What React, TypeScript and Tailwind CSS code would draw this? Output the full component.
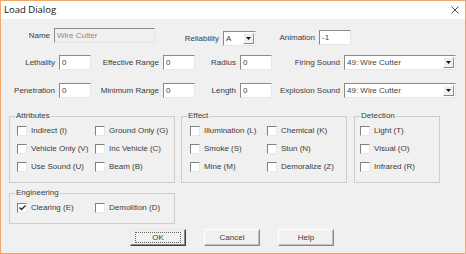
import { ReactNode } from "react";

const font = { fontFamily: '"Liberation Sans", Arial, sans-serif' };

function Label({ w, children }: { w: string; children: ReactNode }) {
  return <div className={`${w} shrink-0 pr-[4px] text-right`}>{children}</div>;
}

function TextBox({ w, value, disabled }: { w: string; value: string; disabled?: boolean }) {
  return (
    <div
      className={
        `${w} h-[15px] shrink-0 flex items-center pl-[2px] border border-t-[#8a8a8a] border-l-[#8a8a8a] border-r-[#e6e6e6] border-b-[#e6e6e6] ` +
        (disabled ? "bg-[#f0f0f0] text-[#8a8a8a]" : "bg-white text-[#444]")
      }
    >
      {value}
    </div>
  );
}

function Combo({ w, value }: { w: string; value: string }) {
  return (
    <div
      className={`${w} h-[15px] shrink-0 flex items-center bg-white border border-t-[#8a8a8a] border-l-[#8a8a8a] border-r-[#e6e6e6] border-b-[#e6e6e6]`}
    >
      <div className="flex-1 pl-[2px] text-[#444] truncate">{value}</div>
      <div className="w-[11px] h-[11px] mr-[1px] flex items-center justify-center bg-[#f0f0f0] border border-t-white border-l-white border-r-[#8a8a8a] border-b-[#8a8a8a]">
        <svg width="5" height="3" viewBox="0 0 5 3">
          <path d="M0 0h5L2.5 3z" fill="#111" />
        </svg>
      </div>
    </div>
  );
}

function Check({ label, checked }: { label: string; checked?: boolean }) {
  return (
    <div className="h-[18px] flex items-center gap-[4px]">
      <div className="w-[10px] h-[10px] shrink-0 bg-white border border-t-[#808080] border-l-[#808080] border-r-[#e8e8e8] border-b-[#e8e8e8] flex items-center justify-center">
        {checked && (
          <svg width="7" height="6" viewBox="0 0 7 6">
            <path d="M0.5 2.5L2.5 4.5L6.5 0.5" stroke="#222" strokeWidth="1.3" fill="none" />
          </svg>
        )}
      </div>
      <span className="whitespace-nowrap">{label}</span>
    </div>
  );
}

function Group({ title, w, h, children }: { title: string; w: string; h: string; children: ReactNode }) {
  return (
    <fieldset className={`${w} ${h} shrink-0 border border-[#cdcdcd]`}>
      <legend className="ml-[5px] px-[1px] leading-[10px]">{title}</legend>
      {children}
    </fieldset>
  );
}

function Button({ label, isDefault }: { label: string; isDefault?: boolean }) {
  return (
    <div
      className={
        "w-[56px] h-[17px] shrink-0 bg-[#f0f0f0] border flex items-center justify-center " +
        (isDefault
          ? "border-t-[#e8e8e8] border-l-[#e8e8e8] border-r-[#404040] border-b-[#404040] shadow-[inset_-1px_-1px_0_#8a8a8a]"
          : "border-t-white border-l-white border-r-[#8a8a8a] border-b-[#8a8a8a] shadow-[inset_-1px_-1px_0_#c0c0c0]")
      }
    >
      {isDefault ? (
        <div className="w-[46px] h-[11px] border border-dotted border-[#666] flex items-center justify-center">{label}</div>
      ) : (
        label
      )}
    </div>
  );
}

export default function App() {
  return (
    <div
      className="w-[466px] h-[254px] overflow-hidden border border-[#f2a66c] bg-[#f0f0f0] text-[8px] text-[#3c3c3c] flex flex-col"
      style={font}
    >
      <div className="h-[18px] shrink-0 bg-white flex items-center justify-between pl-[3px] pr-[6px]">
        <span className="text-[9.5px] text-[#111]" style={{ fontFamily: '"Open Sans", "Liberation Sans", sans-serif' }}>
          Load Dialog
        </span>
        <svg width="8" height="8" viewBox="0 0 8 8">
          <path d="M0.5 0.5L7.5 7.5M7.5 0.5L0.5 7.5" stroke="#333" strokeWidth="0.9" />
        </svg>
      </div>

      <div className="mt-[9px] h-[18px] flex items-start">
        <div className="h-[15px] flex items-center">
          <Label w="w-[53px]">Name</Label>
          <TextBox w="w-[101px]" value="Wire Cutter" disabled />
        </div>
        <div className="mt-[3px] h-[15px] flex items-center">
          <Label w="w-[68px]">Reliability</Label>
          <Combo w="w-[33px]" value="A" />
        </div>
        <div className="mt-[2px] h-[15px] flex items-center">
          <Label w="w-[63px]">Animation</Label>
          <TextBox w="w-[32px]" value="-1" />
        </div>
      </div>

      <div className="mt-[9px] h-[15px] flex items-center">
        <Label w="w-[58px]">Lethality</Label>
        <TextBox w="w-[32px]" value="0" />
        <Label w="w-[72px]">Effective Range</Label>
        <TextBox w="w-[32px]" value="0" />
        <Label w="w-[45px]">Radius</Label>
        <TextBox w="w-[32px]" value="0" />
        <Label w="w-[72px]">Firing Sound</Label>
        <Combo w="w-[112px]" value="49: Wire Cutter" />
      </div>

      <div className="mt-[13px] h-[15px] flex items-center">
        <Label w="w-[58px]">Penetration</Label>
        <TextBox w="w-[32px]" value="0" />
        <Label w="w-[72px]">Minimum Range</Label>
        <TextBox w="w-[32px]" value="0" />
        <Label w="w-[45px]">Length</Label>
        <TextBox w="w-[32px]" value="0" />
        <Label w="w-[72px]">Explosion Sound</Label>
        <Combo w="w-[112px]" value="49: Wire Cutter" />
      </div>

      <div className="mt-[13px] ml-[8px] flex items-start gap-[6px]">
        <Group title="Attributes" w="w-[166px]" h="h-[72px]">
          <div className="grid grid-cols-[78px_1fr] pl-[7px] pt-[1px]">
            <Check label="Indirect (I)" />
            <Check label="Ground Only (G)" />
            <Check label="Vehicle Only (V)" />
            <Check label="Inc Vehicle (C)" />
            <Check label="Use Sound (U)" />
            <Check label="Beam (B)" />
          </div>
        </Group>
        <Group title="Effect" w="w-[166px]" h="h-[72px]">
          <div className="grid grid-cols-[77px_1fr] pl-[8px] pt-[1px]">
            <Check label="Illumination (L)" />
            <Check label="Chemical (K)" />
            <Check label="Smoke (S)" />
            <Check label="Stun (N)" />
            <Check label="Mine (M)" />
            <Check label="Demoralize (Z)" />
          </div>
        </Group>
        <div className="ml-[1px]">
          <Group title="Detection" w="w-[86px]" h="h-[72px]">
            <div className="flex flex-col pl-[5px] pt-[1px]">
              <Check label="Light (T)" />
              <Check label="Visual (O)" />
              <Check label="Infrared (R)" />
            </div>
          </Group>
        </div>
      </div>

      <div className="mt-[5px] ml-[8px] flex">
        <Group title="Engineering" w="w-[166px]" h="h-[36px]">
          <div className="grid grid-cols-[78px_1fr] pl-[7px] pt-[1px]">
            <Check label="Clearing (E)" checked />
            <Check label="Demolition (D)" />
          </div>
        </Group>
      </div>

      <div className="mt-[5px] ml-[129px] flex gap-[18px]">
        <Button label="OK" isDefault />
        <Button label="Cancel" />
        <Button label="Help" />
      </div>
    </div>
  );
}
